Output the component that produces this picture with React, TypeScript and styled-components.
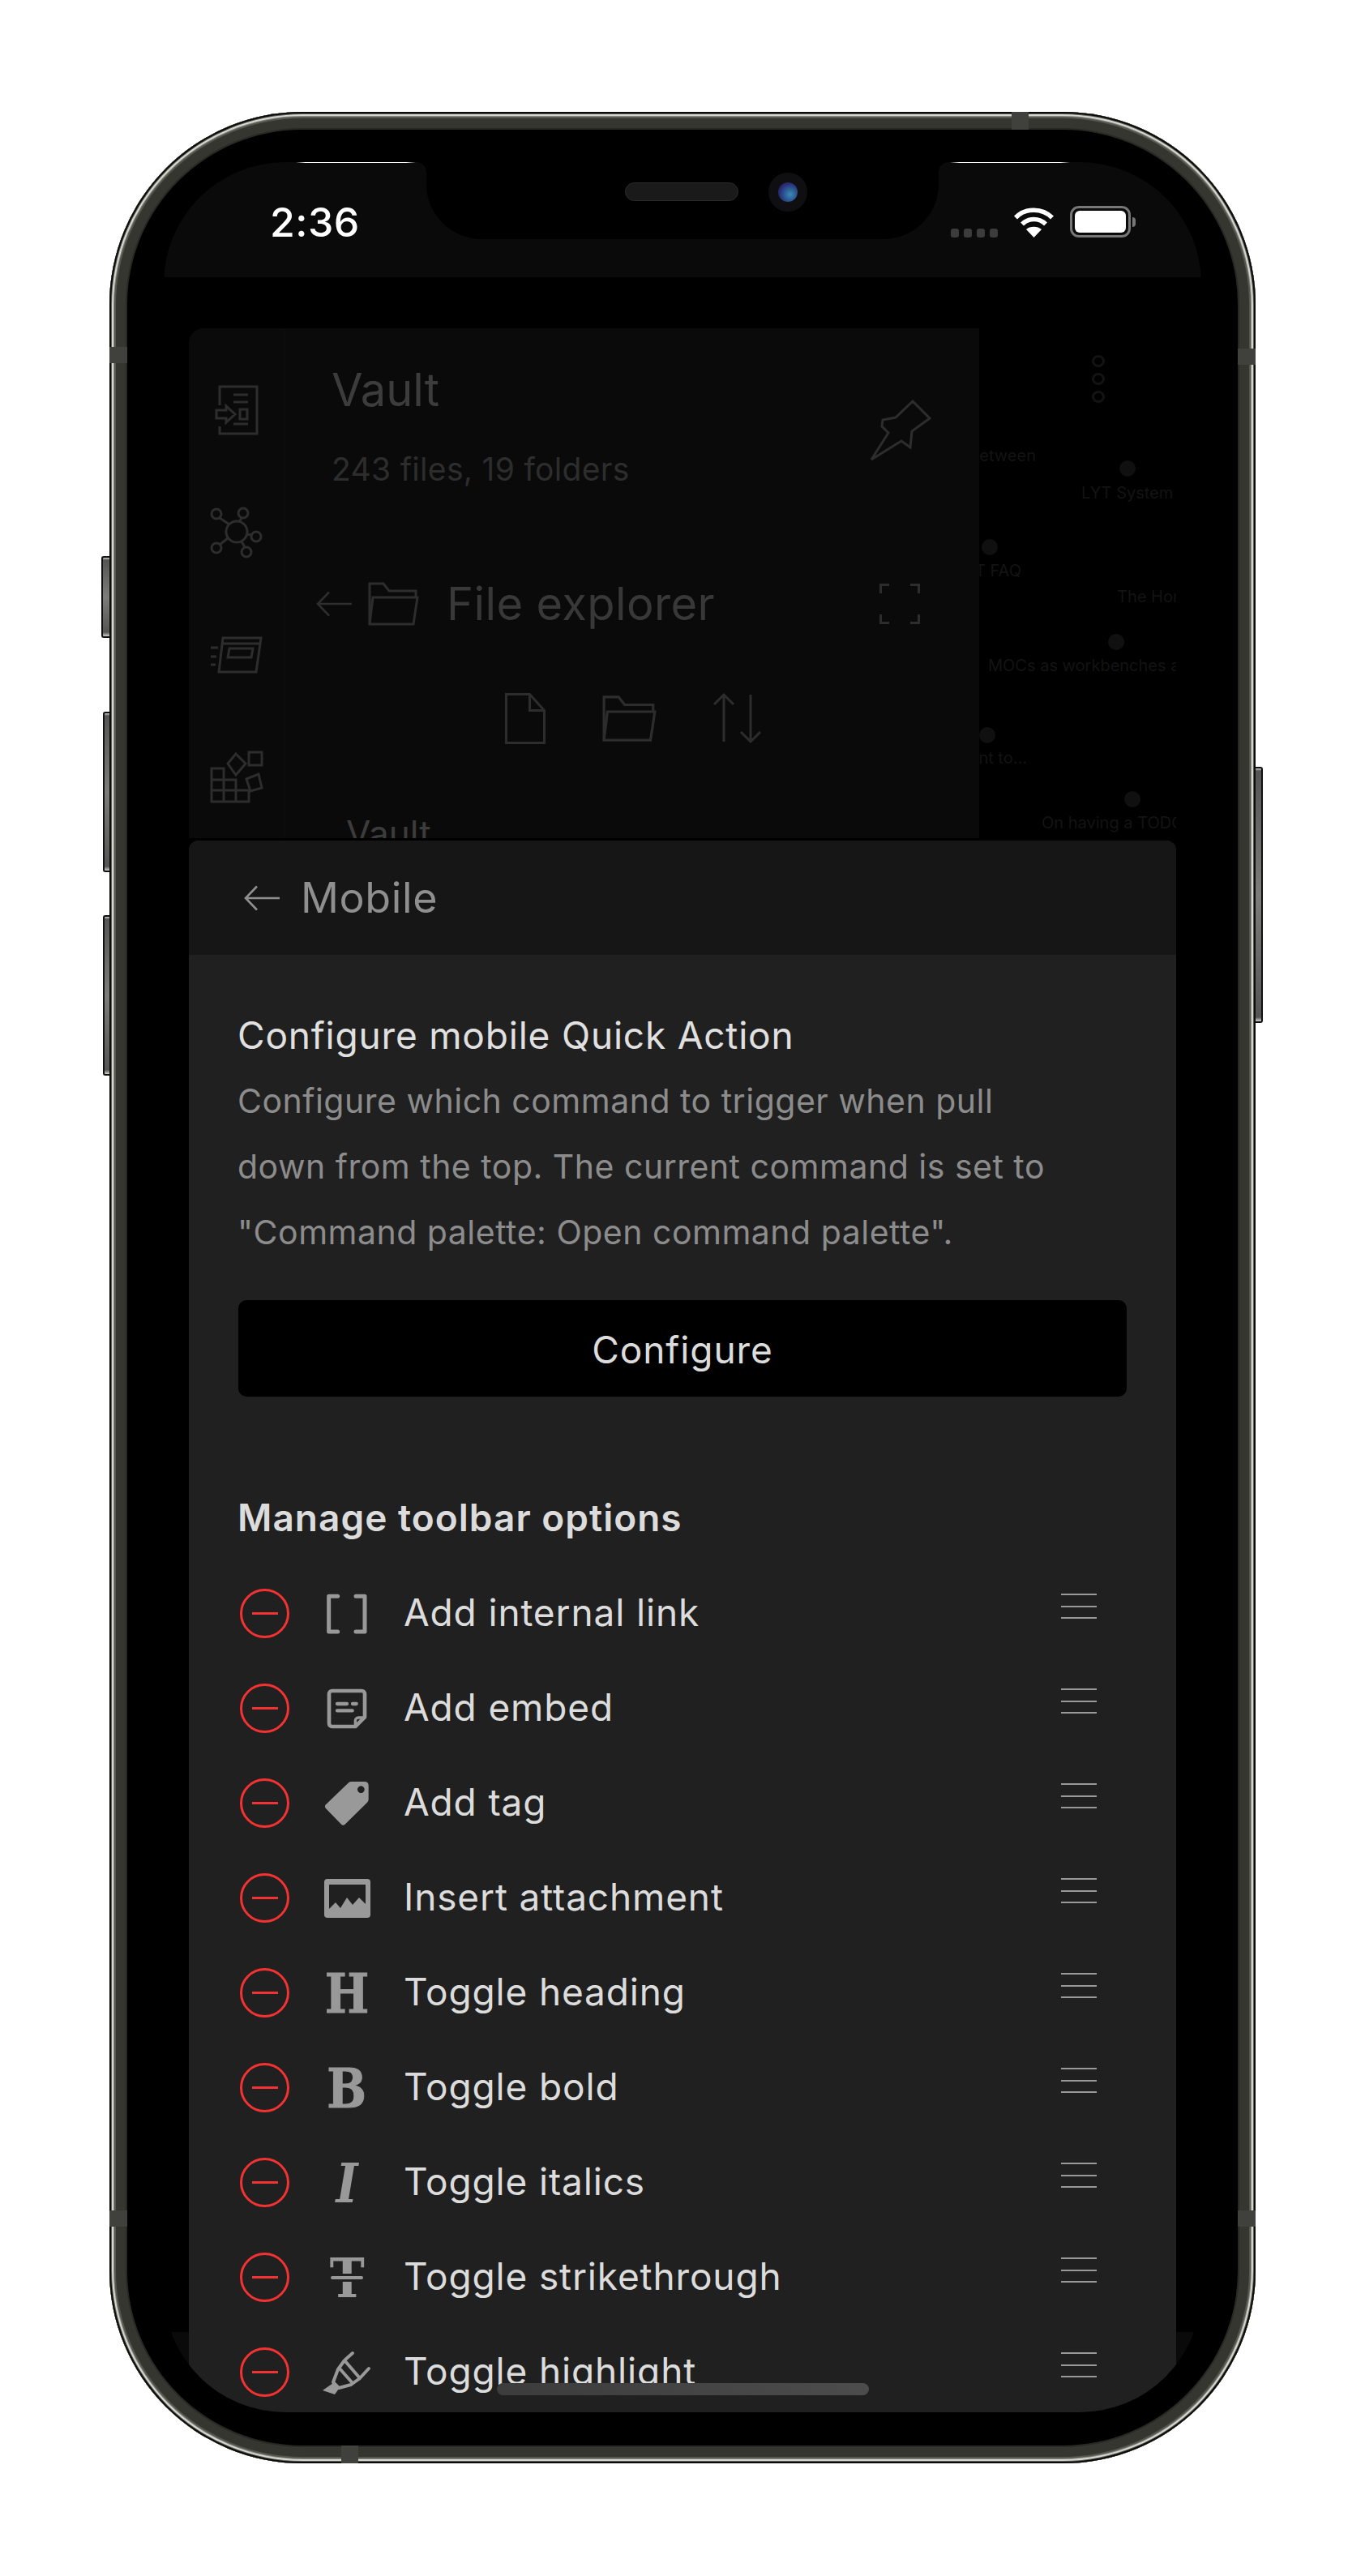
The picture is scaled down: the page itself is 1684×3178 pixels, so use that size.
import React from "react";
import styled, { createGlobalStyle } from "styled-components";

const GlobalStyle = createGlobalStyle`
  html, body {
    margin: 0;
    padding: 0;
    background: #fff;
  }
  body {
    font-family: Inter, "Noto Sans", sans-serif;
  }
`;

const Page = styled.div`
  width: 1684px;
  height: 3178px;
  padding: 138px 0 0 135px;
  box-sizing: border-box;
  overflow: hidden;
`;

const Phone = styled.div`
  position: relative;
  width: 1414px;
  height: 2901px;
  box-sizing: border-box;
  padding: 62px 67px 63px;
  background: #000;
  border-radius: 238px;
  box-shadow:
    inset 0 0 0 2px #0c0c0c,
    inset 0 0 0 3px #5a5b54,
    inset 0 0 0 5px #d6d6cf,
    inset 0 0 0 6px #8b8c85,
    inset 0 0 0 8px #55564f,
    inset 0 0 0 20px #353630,
    inset 0 0 0 22px #282924;
`;

const SideButton = styled.div<{ $side: "left" | "right"; $top: number; $height: number; $depth: number }>`
  position: absolute;
  top: ${(p) => p.$top}px;
  ${(p) => p.$side}: -${(p) => p.$depth}px;
  width: ${(p) => p.$depth}px;
  height: ${(p) => p.$height}px;
  box-sizing: border-box;
  background: linear-gradient(180deg, #d0d0ca 0, #555 3px, #7c7c78 50%, #555 calc(100% - 5px), #d0d0ca 100%);
  border: 2px solid #111;
  border-${(p) => (p.$side === "left" ? "right" : "left")}: 0;
  border-radius: ${(p) => (p.$side === "left" ? "3px 0 0 3px" : "0 3px 3px 0")};
`;

const Band = styled.div<{ $vertical: boolean; $at: number; $edge: string }>`
  position: absolute;
  background: #40413c;
  ${(p) =>
    p.$vertical
      ? `${p.$edge}: 0; left: ${p.$at}px; width: 21px; height: 22px;`
      : `${p.$edge}: 0; top: ${p.$at}px; width: 22px; height: 20px;`}
`;

const Screen = styled.div`
  position: relative;
  height: 100%;
  overflow: hidden;
  border-radius: 150px;
  background: #000;
  display: flex;
  flex-direction: column;

  &::after {
    content: "";
    position: absolute;
    left: 0;
    right: 0;
    bottom: 0;
    height: 99px;
    background: #0a0a0a;
  }
`;

const StatusBar = styled.div`
  flex: none;
  height: 142px;
  box-sizing: border-box;
  background: #0a0a0a;
  display: flex;
  justify-content: space-between;
  align-items: flex-start;
  padding: 49px 80px 0 131px;
`;

const Clock = styled.div`
  font-size: 50px;
  line-height: 50px;
  font-weight: 500;
  letter-spacing: 0.5px;
  color: #fff;
`;

const StatusIcons = styled.div`
  display: flex;
  align-items: flex-end;
  gap: 19px;
  margin-top: 5px;
  height: 39px;
`;

const SignalDots = styled.div`
  display: flex;
  gap: 6px;
`;

const SignalDot = styled.span`
  width: 10px;
  height: 11px;
  border-radius: 3px;
  background: #3c3c3c;
`;

const Battery = styled.div`
  position: relative;
  width: 75px;
  height: 39px;
  box-sizing: border-box;
  margin-right: 7px;
  padding: 3px;
  border: 3px solid #777;
  border-radius: 11px;

  &::before {
    content: "";
    display: block;
    height: 100%;
    border-radius: 6px;
    background: #fff;
  }

  &::after {
    content: "";
    position: absolute;
    right: -9px;
    top: 11px;
    width: 4px;
    height: 12px;
    border-radius: 0 6px 6px 0;
    background: #777;
  }
`;

const Notch = styled.div`
  position: absolute;
  top: 0;
  left: 324px;
  width: 632px;
  height: 95px;
  background: #000;
  border-radius: 0 0 68px 68px;

  &::before,
  &::after {
    content: "";
    position: absolute;
    top: 0;
    width: 12px;
    height: 12px;
  }
  &::before {
    left: -12px;
    background: radial-gradient(circle at 0 100%, transparent 11.5px, #000 12px);
  }
  &::after {
    right: -12px;
    background: radial-gradient(circle at 100% 100%, transparent 11.5px, #000 12px);
  }
`;

const Speaker = styled.div`
  position: absolute;
  left: 245px;
  top: 25px;
  width: 140px;
  height: 23px;
  box-sizing: border-box;
  border-radius: 12px;
  border: 1px solid #2a2a2a;
  background: #1a1a1a;
`;

const Camera = styled.div`
  position: absolute;
  left: 422px;
  top: 13px;
  width: 48px;
  height: 48px;
  border-radius: 50%;
  background: #0f0f12;
  display: flex;
  align-items: center;
  justify-content: center;

  &::before {
    content: "";
    width: 24px;
    height: 24px;
    border-radius: 50%;
    background: radial-gradient(circle at 62% 62%, #3d8ab5 0, #2a5590 38%, #2b2e78 62%, #12142c 100%);
  }
`;

const EdgeGlint = styled.div<{ $left: number }>`
  position: absolute;
  top: 0;
  left: ${(p) => p.$left}px;
  width: 148px;
  height: 1px;
  background: linear-gradient(90deg, transparent, #fff 8%, #fff 92%, transparent);
`;

const UnderRow = styled.div`
  flex: none;
  display: flex;
  height: 629px;
  margin: 63px 31px 3px;
`;

const Drawer = styled.div`
  flex: none;
  width: 975px;
  display: flex;
  background: #0a0a0a;
  border-radius: 18px 0 0 0;
  overflow: hidden;
`;

const Ribbon = styled.div`
  flex: none;
  width: 118px;
  box-sizing: border-box;
  padding-top: 25px;
  border-right: 1px solid #0d0d0d;
  display: flex;
  flex-direction: column;
`;

const RibbonSlot = styled.div`
  flex: none;
  height: 151px;
  display: flex;
  align-items: center;
  justify-content: center;
`;

const DrawerMain = styled.div`
  flex: 1;
  min-width: 0;
`;

const VaultHead = styled.div`
  display: flex;
  justify-content: space-between;
  align-items: flex-start;
  padding: 46px 60px 0 58px;
`;

const VaultTitle = styled.div`
  font-size: 56px;
  line-height: 60px;
  color: #3c3c3c;
`;

const VaultCount = styled.div`
  margin-top: 43.5px;
  font-size: 39px;
  line-height: 48px;
  letter-spacing: 0.3px;
  color: #2d2d2d;
`;

const PinSlot = styled.div`
  margin-top: 43px;
  line-height: 0;
`;

const ExplorerRow = styled.div`
  display: flex;
  align-items: center;
  height: 64px;
  margin-top: 110px;
  padding: 0 73px 0 39px;
`;

const ExplorerArrowGap = styled.span`
  flex: none;
  width: 20px;
`;

const ExplorerTitle = styled.div`
  margin-left: 34px;
  flex: 1;
  font-size: 56px;
  line-height: 64px;
  letter-spacing: 0.4px;
  color: #383838;
`;

const ExplorerTools = styled.div`
  display: flex;
  justify-content: center;
  align-items: center;
  gap: 70px;
  height: 63px;
  margin-top: 78px;
  padding-left: 4px;
`;

const VaultRoot = styled.div`
  margin-top: 86px;
  padding-left: 76px;
  font-size: 44px;
  line-height: 48px;
  color: #3c3c3c;
`;

const Graph = styled.div`
  position: relative;
  flex: 1;
  overflow: hidden;
`;

const GraphMenu = styled.div`
  position: absolute;
  left: 139px;
  top: 33px;
  display: flex;
  flex-direction: column;
  gap: 7px;
`;

const GraphMenuDot = styled.span`
  width: 16px;
  height: 15px;
  box-sizing: border-box;
  border: 3px solid #131313;
  border-radius: 50%;
`;

const GraphNode = styled.div<{ $x: number; $y: number }>`
  position: absolute;
  left: ${(p) => p.$x - 10}px;
  top: ${(p) => p.$y - 10}px;
  width: 20px;
  height: 20px;
  border-radius: 50%;
  background: #101010;
`;

const GraphLabel = styled.div<{ $x?: number; $right?: number; $y: number }>`
  position: absolute;
  ${(p) => (p.$right !== undefined ? `right: ${p.$right}px;` : `left: ${p.$x}px;`)}
  top: ${(p) => p.$y - 13}px;
  font-size: 20px;
  line-height: 26px;
  white-space: nowrap;
  color: #131313;
`;

const Sheet = styled.div`
  position: relative;
  z-index: 1;
  flex: 1;
  min-height: 0;
  margin: 0 31px;
  border-radius: 12px 12px 0 0;
  overflow: hidden;
  background: #202020;
`;

const SheetHeader = styled.div`
  height: 141px;
  box-sizing: border-box;
  background: #161616;
  display: flex;
  align-items: center;
  gap: 26px;
  padding: 0 0 0 68px;
`;

const SheetTitle = styled.div`
  font-size: 52px;
  line-height: 60px;
  letter-spacing: 0.6px;
  color: #8f8f8f;
`;

const SheetBody = styled.div`
  padding: 71px 61px 0;
`;

const SettingName = styled.div`
  margin-left: -1px;
  font-size: 46px;
  line-height: 56px;
  letter-spacing: 0.8px;
  color: #e0e0e0;
`;

const SettingDesc = styled.div`
  margin: 12.5px 0 0 -1px;
  font-size: 41px;
  line-height: 81px;
  letter-spacing: 0.5px;
  color: #8c8c8c;
  white-space: nowrap;
`;

const ConfigureButton = styled.button`
  display: block;
  width: 100%;
  height: 119px;
  margin-top: 43.5px;
  padding: 2px 0 0;
  border: 0;
  border-radius: 10px;
  background: #000;
  color: #dcdcdc;
  font-family: inherit;
  font-size: 46px;
  letter-spacing: 0.9px;
`;

const SectionTitle = styled.div`
  margin: 119px 0 0 -1px;
  font-size: 46px;
  line-height: 60px;
  font-weight: 600;
  letter-spacing: 1px;
  color: #dcdcdc;
`;

const ToolbarList = styled.div`
  margin-top: 30px;
`;

const ToolbarRow = styled.div`
  display: flex;
  align-items: center;
  height: 117px;
  padding-left: 2px;
`;

const RemoveButton = styled.div`
  flex: none;
  position: relative;
  width: 61px;
  height: 61px;
  box-sizing: border-box;
  border: 3px solid #f53232;
  border-radius: 50%;
  display: flex;
  align-items: center;
  justify-content: center;

  &::before {
    content: "";
    width: 32px;
    height: 3px;
    background: #f53232;
  }
`;

const ToolIcon = styled.div`
  flex: none;
  position: relative;
  width: 50px;
  height: 50px;
  margin: 0 45px 0 46px;
  display: flex;
  align-items: center;
  justify-content: center;
  color: #999;
`;

const SerifGlyph = styled.span<{ $scale: number; $italic?: boolean; $heavy?: boolean }>`
  font-family: "DejaVu Serif", "Liberation Serif", serif;
  font-weight: 700;
  font-style: ${(p) => (p.$italic ? "italic" : "normal")};
  font-size: 68px;
  line-height: 50px;
  color: #999;
  transform: scaleX(${(p) => p.$scale});
  -webkit-text-stroke: ${(p) => (p.$heavy ? "1px #999" : "0")};
`;

const StrikeBar = styled.span`
  position: absolute;
  left: 5px;
  right: 5px;
  top: 23px;
  height: 4px;
  border-radius: 2px;
  background: #999;
  box-shadow: 0 0 0 3px #202020;
`;

const ToolLabel = styled.div`
  flex: 1;
  margin-bottom: 3px;
  font-size: 46px;
  line-height: 56px;
  letter-spacing: 0.85px;
  color: #dcdcdc;
  white-space: nowrap;
`;

const DragHandle = styled.div`
  flex: none;
  width: 44px;
  height: 31px;
  margin: 0 37px 18px 0;
  display: flex;
  flex-direction: column;
  justify-content: space-between;
`;

const DragLine = styled.span`
  height: 2px;
  background: #999;
`;

const HomeBar = styled.div`
  position: absolute;
  z-index: 2;
  left: 411px;
  bottom: 21px;
  width: 459px;
  height: 15px;
  border-radius: 8px;
  background: linear-gradient(90deg, #3c3c3c, #4c4c4c);
`;

const DimIcon = styled.svg`
  display: block;
  flex: none;
  fill: none;
  stroke: #2d2d2d;
  stroke-width: 3;
  overflow: visible;
`;

const ToolSvg = styled.svg`
  display: block;
  overflow: visible;
`;

const AttachmentSvg = styled(ToolSvg)`
  flex: none;
  margin: 0 -3.5px;
`;

const WifiSvg = styled.svg`
  display: block;
`;

const ArrowSvg = styled.svg`
  display: block;
  flex: none;
`;

const Wifi = () => (
  <WifiSvg width="51" height="37" viewBox="0 0 51 37" fill="none">
    <path d="M3 12.5C15 0 36 0 48 12.5" stroke="#fff" strokeWidth="5.5" />
    <path d="M11 20.5C19 12.5 32 12.5 40 20.5" stroke="#fff" strokeWidth="5.5" />
    <path d="M25.5 37L16 27C21 22.5 30 22.5 35 27Z" fill="#fff" />
  </WifiSvg>
);

const BackArrow = ({ stroke }: { stroke: string }) => (
  <ArrowSvg width="44" height="32" viewBox="0 0 44 32" fill="none">
    <path d="M44 16H2M16 1.5L2 16l14 14.5" stroke={stroke} strokeWidth="2.6" />
  </ArrowSvg>
);

const OpenFolder = ({ w, h }: { w: number; h: number }) => (
  <DimIcon width={w} height={h} viewBox="0 0 63 54">
    <path d="M2 52V2h17l7 9h33v8" />
    <path d="M2 52h54l5-33H6L2 52z" />
  </DimIcon>
);

const RibbonIcons = [
  <DimIcon key="a" width="52" height="60" viewBox="0 0 52 60">
    <path d="M5 24V1h46v58H5v-9" />
    <path d="M1 30h12v-5l11 10-11 10v-5H1zM22 11h18M22 20h18M22 47h18M30 29h9v12h-9z" />
  </DimIcon>,
  <DimIcon key="b" width="64" height="62" viewBox="0 0 64 62">
    <circle cx="32" cy="30" r="13" />
    <circle cx="7" cy="8" r="6" />
    <circle cx="40" cy="7" r="6" />
    <circle cx="56" cy="36" r="6" />
    <circle cx="44" cy="55" r="6" />
    <circle cx="7" cy="50" r="6" />
    <path d="M11 13l12 8M38 13l-3 5M45 33l5 1M38 42l4 7M21 38l-10 8" />
  </DimIcon>,
  <DimIcon key="c" width="64" height="44" viewBox="0 0 64 44">
    <path d="M15 1h47l-6 42H10zM14 8h47M23 14h29l-2 11H21zM0 13h9M0 24h7M0 34h6" />
  </DimIcon>,
  <DimIcon key="d" width="64" height="63" viewBox="0 0 64 63">
    <path d="M1 21h15v41H1zM1 35h30v27H16M1 48h46v14H31V35" />
    <path d="M31 3l12 12-12 14-10-14zM47 1h16v16H47zM44 34l15-6 4 17-14 4z" />
  </DimIcon>,
];

const toolbarItems: { label: string; icon: React.ReactNode }[] = [
  {
    label: "Add internal link",
    icon: (
      <ToolSvg width="50" height="50" viewBox="0 0 150 150" fill="none" stroke="#999" strokeWidth="15" strokeLinecap="round" strokeLinejoin="round">
        <path d="M41 10H8v131h33M108 10h33v131h-33" />
      </ToolSvg>
    ),
  },
  {
    label: "Add embed",
    icon: (
      <ToolSvg width="50" height="50" viewBox="0 0 150 150" fill="none" stroke="#999" strokeWidth="14" strokeLinecap="round" strokeLinejoin="round">
        <path d="M20 9h110a11 11 0 0 1 11 11v86l-35 35H20A11 11 0 0 1 9 130V20A11 11 0 0 1 20 9z" />
        <path d="M141 108h-23a12 12 0 0 0-12 12v21" strokeWidth="10" />
        <path d="M39 57h36M96 57h14M39 82h56" strokeWidth="13" />
      </ToolSvg>
    ),
  },
  {
    label: "Add tag",
    icon: (
      <ToolSvg width="50" height="50" viewBox="0 0 150 150">
        <path
          fillRule="evenodd"
          fill="#999"
          d="M-3 79L82-3q4-3 10-3h48q15 0 15 15v51q0 6-5 11L67 153q-6 5-12 0L-4 92q-5-7 1-13zM127 10a13 13 0 1 0 .01 0z"
        />
      </ToolSvg>
    ),
  },
  {
    label: "Insert attachment",
    icon: (
      <AttachmentSvg width="57" height="48" viewBox="0 0 57 48">
        <rect x="0" y="0" width="57" height="48" rx="4" fill="#999" />
        <path d="M6 7h45v24l-8-8-8 9-7-9-8 13-6-7-8 8z" fill="#202020" />
      </AttachmentSvg>
    ),
  },
  { label: "Toggle heading", icon: <SerifGlyph $scale={0.85} $heavy>H</SerifGlyph> },
  { label: "Toggle bold", icon: <SerifGlyph $scale={0.85} $heavy>B</SerifGlyph> },
  { label: "Toggle italics", icon: <SerifGlyph $scale={0.85} $italic>I</SerifGlyph> },
  {
    label: "Toggle strikethrough",
    icon: (
      <>
        <SerifGlyph $scale={0.85}>T</SerifGlyph>
        <StrikeBar />
      </>
    ),
  },
  {
    label: "Toggle highlight",
    icon: (
      <ToolSvg width="50" height="50" viewBox="0 0 50 50" fill="none" stroke="#999" strokeWidth="4" strokeLinecap="round" strokeLinejoin="round">
        <path d="M23 9l9-8M52 20L40 33M22 10l19 22M16 20l15 17M22 10l-8 11-6 16 7 7 15-4 11-8" />
        <path d="M8 38l7 7-5 7-15-5z" fill="#999" stroke="none" />
      </ToolSvg>
    ),
  },
];

export default function App() {
  return (
    <Page>
      <GlobalStyle />
      <Phone>
        <SideButton $side="left" $top={548} $height={101} $depth={10} />
        <SideButton $side="left" $top={740} $height={198} $depth={8} />
        <SideButton $side="left" $top={991} $height={198} $depth={8} />
        <SideButton $side="right" $top={808} $height={316} $depth={9} />
        <Band $vertical $at={1113} $edge="top" />
        <Band $vertical $at={286} $edge="bottom" />
        <Band $vertical={false} $at={290} $edge="left" />
        <Band $vertical={false} $at={2589} $edge="left" />
        <Band $vertical={false} $at={292} $edge="right" />
        <Band $vertical={false} $at={2589} $edge="right" />

        <Screen>
          <StatusBar>
            <Clock>2:36</Clock>
            <StatusIcons>
              <SignalDots>
                <SignalDot />
                <SignalDot />
                <SignalDot />
                <SignalDot />
              </SignalDots>
              <Wifi />
              <Battery />
            </StatusIcons>
          </StatusBar>
          <Notch>
            <Speaker />
            <Camera />
          </Notch>
          <EdgeGlint $left={163} />
          <EdgeGlint $left={970} />

          <UnderRow>
            <Drawer>
              <Ribbon>
                {RibbonIcons.map((icon, i) => (
                  <RibbonSlot key={i}>{icon}</RibbonSlot>
                ))}
              </Ribbon>
              <DrawerMain>
                <VaultHead>
                  <div>
                    <VaultTitle>Vault</VaultTitle>
                    <VaultCount>243 files, 19 folders</VaultCount>
                  </div>
                  <PinSlot>
                    <DimIcon width="74" height="74" viewBox="0 0 74 74">
                      <path d="M52 1l21 21-22 16-2 20-11-8L1 73l21-33-8-8 1-8 16-3z" />
                    </DimIcon>
                  </PinSlot>
                </VaultHead>
                <ExplorerRow>
                  <BackArrow stroke="#2d2d2d" />
                  <ExplorerArrowGap />
                  <OpenFolder w={63} h={54} />
                  <ExplorerTitle>File explorer</ExplorerTitle>
                  <DimIcon width="50" height="50" viewBox="0 0 50 50">
                    <path d="M12 1.500H1.500V12M38 1.500h10.500V12M12 48.500H1.500V38M38 48.500h10.500V38" />
                  </DimIcon>
                </ExplorerRow>
                <ExplorerTools>
                  <DimIcon width="50" height="63" viewBox="0 0 50 63">
                    <path d="M1.500 1.500h29l18 20v40h-47zM30.500 1.500v20h18" />
                  </DimIcon>
                  <OpenFolder w={67} h={59} />
                  <DimIcon width="60" height="62" viewBox="0 0 60 62">
                    <path d="M13 60V2M1 14L13 2l12 12M46 2v58M34 48l12 12 12-12" />
                  </DimIcon>
                </ExplorerTools>
                <VaultRoot>Vault</VaultRoot>
              </DrawerMain>
            </Drawer>
            <Graph>
              <GraphMenu>
                <GraphMenuDot />
                <GraphMenuDot />
                <GraphMenuDot />
              </GraphMenu>
              <GraphLabel $right={173} $y={157}>between</GraphLabel>
              <GraphNode $x={183} $y={173} />
              <GraphLabel $x={126} $y={203}>LYT System</GraphLabel>
              <GraphNode $x={13} $y={270} />
              <GraphLabel $right={191} $y={299}>LYT FAQ</GraphLabel>
              <GraphLabel $x={170} $y={331}>The Home note</GraphLabel>
              <GraphNode $x={169} $y={387} />
              <GraphLabel $x={11} $y={416}>MOCs as workbenches and more</GraphLabel>
              <GraphNode $x={10} $y={502} />
              <GraphLabel $right={184} $y={530}>Point to...</GraphLabel>
              <GraphNode $x={189} $y={581} />
              <GraphLabel $x={77} $y={610}>On having a TODO list</GraphLabel>
            </Graph>
          </UnderRow>

          <Sheet>
            <SheetHeader>
              <BackArrow stroke="#8f8f8f" />
              <SheetTitle>Mobile</SheetTitle>
            </SheetHeader>
            <SheetBody>
              <SettingName>Configure mobile Quick Action</SettingName>
              <SettingDesc>
                Configure which command to trigger when pull
                <br />
                down from the top. The current command is set to
                <br />
                "Command palette: Open command palette".
              </SettingDesc>
              <ConfigureButton>Configure</ConfigureButton>
              <SectionTitle>Manage toolbar options</SectionTitle>
              <ToolbarList>
                {toolbarItems.map((item) => (
                  <ToolbarRow key={item.label}>
                    <RemoveButton />
                    <ToolIcon>{item.icon}</ToolIcon>
                    <ToolLabel>{item.label}</ToolLabel>
                    <DragHandle>
                      <DragLine />
                      <DragLine />
                      <DragLine />
                    </DragHandle>
                  </ToolbarRow>
                ))}
              </ToolbarList>
            </SheetBody>
          </Sheet>
          <HomeBar />
        </Screen>
      </Phone>
    </Page>
  );
}
